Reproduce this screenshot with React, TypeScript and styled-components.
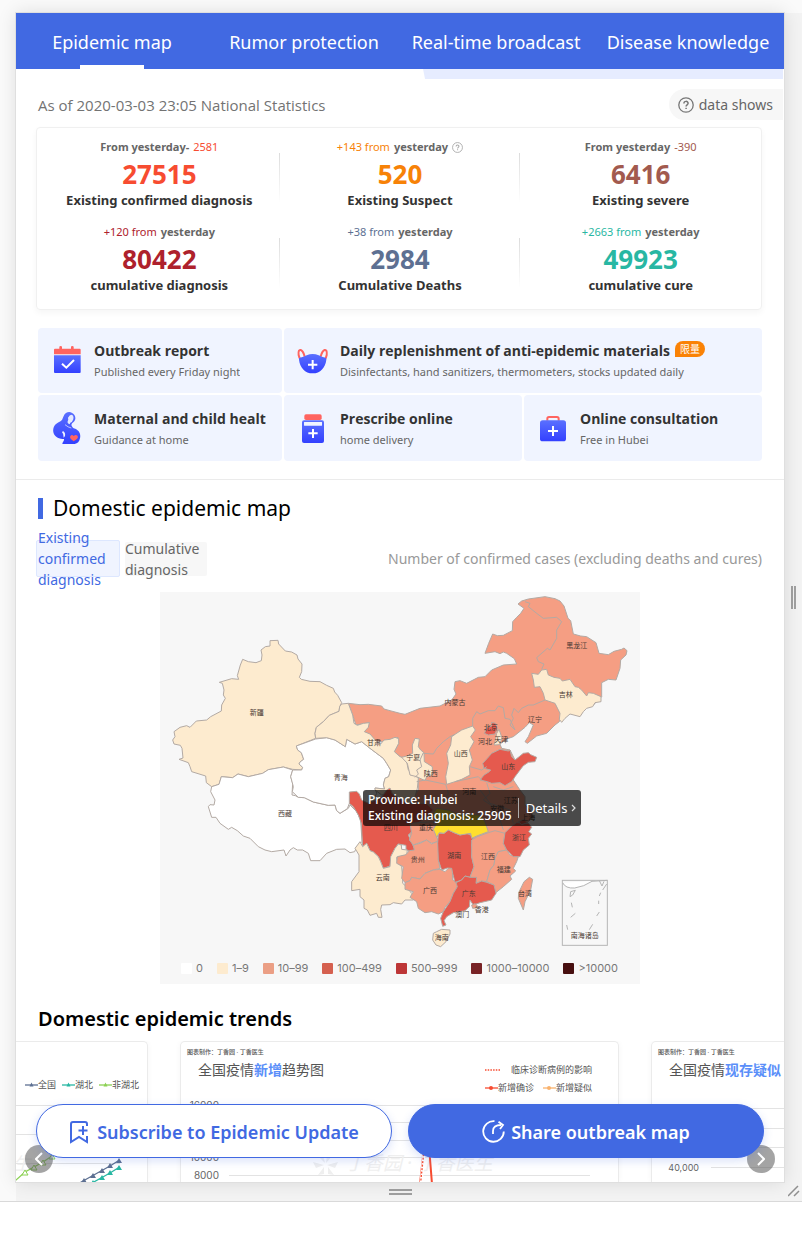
import React from 'react';
import styled, { createGlobalStyle, css } from 'styled-components';

const GlobalStyle = createGlobalStyle`
  * { box-sizing: border-box; }
  body {
    margin: 0;
    background: #fff;
    font-family: 'Noto Sans', 'Noto Sans CJK SC', sans-serif;
  }
  button { font-family: inherit; }
  h1, h2, h3, p, ul { margin: 0; padding: 0; }
  ul { list-style: none; }
`;

/* ---------- Responsive preview frame ---------- */

const Stage = styled.div`
  display: grid;
  grid-template-columns: 16px minmax(0, 1fr) 18px;
  grid-template-rows: 13px auto 19px;
  background: #fafafa;
  border-bottom: 1px solid #d9d9d9;
`;

const Device = styled.main`
  grid-area: 2 / 2;
  position: relative;
  overflow: hidden;
  background: #fff;
  outline: 1px solid #dfdfdf;
  box-shadow: 0 0 18px rgba(0, 0, 0, 0.12);
`;

const SideGutter = styled.div`
  grid-area: 2 / 3 / 4 / 4;
  display: flex;
  flex-direction: column;
  align-items: center;
  justify-content: center;
  padding-bottom: 19px;
  background: #f3f3f3;
`;

const BottomGutter = styled.div`
  grid-area: 3 / 2;
  display: flex;
  align-items: center;
  justify-content: center;
  background: #f3f3f3;
`;

const Grip = styled.span<{ $vertical?: boolean }>`
  display: block;
  ${({ $vertical }) =>
    $vertical
      ? css`
          width: 5px;
          height: 23px;
          border-left: 2px solid #a0a0a0;
          border-right: 2px solid #a0a0a0;
        `
      : css`
          width: 23px;
          height: 6px;
          border-top: 2px solid #a0a0a0;
          border-bottom: 2px solid #a0a0a0;
        `}
`;

const CornerGrip = styled.svg`
  grid-area: 3 / 3;
  align-self: start;
  justify-self: end;
  margin: 3px 2px 0 0;
`;

/* ---------- Navigation ---------- */

const Nav = styled.nav`
  display: grid;
  grid-template-columns: repeat(4, 1fr);
  height: 56px;
  background: #4169e2;
`;

const NavLink = styled.a<{ $active?: boolean }>`
  display: flex;
  align-items: center;
  justify-content: center;
  padding-top: 2px;
  color: #fff;
  font-size: 18px;
  white-space: nowrap;
  text-decoration: none;
  background: ${({ $active }) =>
    $active ? 'linear-gradient(#fff, #fff) center bottom / 64px 4px no-repeat' : 'none'};
`;

const Banner = styled.div`
  height: 10px;
  margin: 0 1px 0 53%;
  background: #e6ecff;
  clip-path: polygon(0 0, 100% 0, 100% 100%, 2px 100%);
`;

/* ---------- Statistics ---------- */

const StatsHead = styled.div`
  display: flex;
  align-items: center;
  justify-content: space-between;
  margin: 10px 1px 7px 22px;
  font-family: 'Open Sans', sans-serif;
  font-size: 15px;
  color: #737373;
`;

const DataButton = styled.button`
  display: flex;
  align-items: center;
  gap: 5px;
  height: 31px;
  padding: 0 10px 0 9px;
  border: 0;
  border-radius: 16px 0 0 16px;
  background: #f7f7f7;
  color: #666;
  font-family: 'Noto Sans', sans-serif;
  font-size: 14px;
`;

const StatsCard = styled.section`
  display: grid;
  grid-template-columns: repeat(3, 1fr);
  row-gap: 13px;
  margin: 0 22px 0 20px;
  padding: 9px 0 15px 2px;
  border: 1px solid #f0f0f0;
  border-radius: 4px;
  box-shadow: 0 3px 6px rgba(0, 0, 0, 0.04);
`;

const Stat = styled.div`
  text-align: center;
  background: linear-gradient(#dcdcdc, #fff) right 16px / 1px 50px no-repeat;
  &:nth-child(3n) { background: none; }
`;

const StatChange = styled.p<{ $color: string }>`
  display: flex;
  align-items: center;
  justify-content: center;
  gap: 4px;
  line-height: 20px;
  font-size: 11px;
  color: ${({ $color }) => $color};
  b { color: #666; }
`;

const StatValue = styled.p<{ $color: string }>`
  font-size: 26px;
  line-height: 34px;
  font-weight: 700;
  color: ${({ $color }) => $color};
`;

const StatLabel = styled.p`
  font-size: 13px;
  line-height: 18px;
  font-weight: 700;
  color: #333;
`;

/* ---------- Services ---------- */

const Services = styled.section`
  display: grid;
  grid-template-columns: 244fr 238fr 238fr;
  grid-template-rows: 65px 66px;
  gap: 2px;
  margin: 18px 22px;
`;

const Tile = styled.a<{ $wide?: boolean }>`
  display: flex;
  align-items: center;
  gap: 11px;
  min-width: 0;
  padding: 0 12px 0 13px;
  border-radius: 4px;
  background: #f0f4ff;
  text-decoration: none;
  ${({ $wide }) => $wide && 'grid-column: span 2;'}
  svg { flex: none; }
`;

const TileText = styled.div`
  min-width: 0;
  overflow: hidden;
  white-space: nowrap;
`;

const TileTitle = styled.p`
  display: flex;
  gap: 5px;
  font-family: 'Open Sans', 'Noto Sans CJK SC', sans-serif;
  font-size: 14px;
  line-height: 22px;
  font-weight: 700;
  color: #333;
`;

const TileNote = styled.p`
  font-size: 11px;
  line-height: 19px;
  color: #666;
`;

const Tag = styled.span`
  height: 16px;
  margin-top: 1px;
  padding: 0 5px;
  border-radius: 8px 8px 8px 0;
  background: #fa8206;
  color: #fff;
  font-size: 10px;
  line-height: 16px;
  font-weight: 400;
`;

/* ---------- Map section ---------- */

const MapSection = styled.section`
  border-top: 1px solid #ebebeb;
`;

const SectionTitle = styled.h2`
  display: flex;
  align-items: center;
  gap: 10px;
  margin: 13px 22px 0;
  font-size: 21px;
  line-height: 30px;
  font-weight: 400;
  color: #000;
  &::before {
    content: '';
    width: 5px;
    height: 21px;
    background: #4169e2;
  }
`;

const MapControls = styled.div`
  display: flex;
  align-items: center;
  gap: 5px;
  height: 37px;
  margin: 17px 22px 15px 20px;
`;

const Toggle = styled.button<{ $active?: boolean }>`
  display: flex;
  align-items: center;
  width: ${({ $active }) => ($active ? 84 : 82)}px;
  height: ${({ $active }) => ($active ? 37 : 34)}px;
  padding: ${({ $active }) => ($active ? '0 1px' : '0')};
  border: ${({ $active }) => ($active ? '1px solid #dde7ff' : '0')};
  border-radius: 2px;
  background: ${({ $active }) => ($active ? '#f0f4ff' : '#f7f7f7')};
  color: ${({ $active }) => ($active ? '#4169e2' : '#666')};
  font-size: 14px;
  line-height: 21px;
  text-align: left;
`;

const MapCaption = styled.p`
  margin-left: auto;
  font-size: 14px;
  line-height: 21px;
  color: #999;
`;

const MapFrame = styled.figure`
  position: relative;
  width: 480px;
  margin: 0 auto;
  background: #f7f7f7;
  svg { display: block; }
`;

const Legend = styled.ul`
  display: flex;
  gap: 14px;
  height: 32px;
  padding: 0 0 0 21px;
  align-items: center;
`;

const LegendItem = styled.li<{ $color: string }>`
  display: flex;
  align-items: center;
  gap: 4px;
  font-family: Inter, sans-serif;
  font-size: 11px;
  color: #777;
  &::before {
    content: '';
    width: 11px;
    height: 11px;
    border-radius: 1px;
    background: ${({ $color }) => $color};
  }
`;

const MapTip = styled.div`
  position: absolute;
  left: 203px;
  top: 198px;
  display: flex;
  align-items: center;
  height: 36px;
  padding: 0 5px;
  border-radius: 3px;
  background: rgba(0, 0, 0, 0.7);
  color: #fff;
  font-size: 12px;
  line-height: 16px;
  font-weight: 500;
  white-space: nowrap;
`;

const TipLink = styled.a`
  display: flex;
  align-items: center;
  gap: 4px;
  height: 20px;
  margin-left: 6px;
  padding-left: 7px;
  border-left: 1px solid #aaa;
  color: #fff;
  font-size: 13px;
  font-weight: 400;
  text-decoration: none;
`;

/* ---------- Trends ---------- */

const TrendsTitle = styled.h2`
  margin: 20px 22px 7px;
  font-size: 20px;
  line-height: 30px;
  font-weight: 600;
  color: #000;
`;

const Track = styled.div`
  display: flex;
  justify-content: center;
  gap: 32px;
  padding-right: 1px;
  overflow: hidden;
`;

const TrendCard = styled.article`
  flex: 0 0 439px;
  border: 1px solid #ebebeb;
  border-bottom: 0;
  border-radius: 5px 5px 0 0;
  box-shadow: 0 0 6px rgba(0, 0, 0, 0.04);
  svg { display: block; }
`;

const TrendHead = styled.header`
  display: flex;
  justify-content: space-between;
  height: 57px;
  padding: 5px 26px 0 6px;
`;

const TrendCredit = styled.p`
  font-size: 6px;
  line-height: 10px;
  font-weight: 500;
  color: #555;
`;

const TrendTitle = styled.h3`
  padding-left: 11px;
  font-size: 14px;
  line-height: 26px;
  font-weight: 400;
  color: #555;
  b { color: #5b8ff9; }
`;

const SeriesList = styled.ul<{ $edge?: boolean }>`
  display: flex;
  flex-wrap: wrap;
  justify-content: flex-end;
  align-content: flex-end;
  column-gap: ${({ $edge }) => ($edge ? 6 : 9)}px;
  width: ${({ $edge }) => ($edge ? 140 : 120)}px;
  margin-right: ${({ $edge }) => ($edge ? '-18px' : '0')};
  padding-bottom: ${({ $edge }) => ($edge ? '5px' : '2px')};
  font-size: 9px;
  line-height: 18px;
  color: #555;
  white-space: nowrap;
`;

const SeriesItem = styled.li<{ $gap?: number }>`
  display: flex;
  align-items: center;
  gap: ${({ $gap = 0 }) => $gap}px;
`;

/* ---------- Floating controls ---------- */

const Actions = styled.div`
  position: absolute;
  left: 20px;
  right: 20px;
  bottom: 24px;
  display: grid;
  grid-template-columns: 1fr 1fr;
  gap: 16px;
`;

const ActionButton = styled.button<{ $primary?: boolean }>`
  display: flex;
  align-items: center;
  justify-content: center;
  gap: ${({ $primary }) => ($primary ? 6 : 8)}px;
  height: 54px;
  padding: 1px 0 0;
  border: 1px solid #4169e2;
  border-radius: 27px;
  background: ${({ $primary }) => ($primary ? '#4169e2' : '#fff')};
  color: ${({ $primary }) => ($primary ? '#fff' : '#4169e2')};
  box-shadow: 0 3px 10px rgba(65, 105, 226, 0.2);
  font-size: 18px;
  font-weight: 600;
  white-space: nowrap;
`;

const Arrow = styled.button<{ $side: 'left' | 'right' }>`
  position: absolute;
  ${({ $side }) => $side}: 9px;
  bottom: 9px;
  display: grid;
  place-items: center;
  width: 28px;
  height: 28px;
  padding: 0;
  border: 0;
  border-radius: 50%;
  background: rgba(90, 90, 90, 0.55);
`;

/* ---------- Icons ---------- */

const Help = ({ size, color }: { size: number; color: string }) => (
  <svg width={size} height={size} viewBox="0 0 16 16" fill="none" stroke={color} strokeWidth="1.3">
    <circle cx="8" cy="8" r="7.2" />
    <path d="M5.9 6.5c0-2.8 4.2-2.8 4.2-.2 0 1.6-2 1.5-2 3.2M8.1 10.7v1.4" strokeWidth="1.5" />
  </svg>
);

const IconDefs = () => (
  <defs>
    <linearGradient id="blue" x1="0" y1="0" x2="0" y2="1">
      <stop offset="0" stopColor="#5a70ff" />
      <stop offset="1" stopColor="#3340ff" />
    </linearGradient>
  </defs>
);

const CalendarIcon = () => (
  <svg width="32" height="32" viewBox="0 0 96 96">
    <IconDefs />
    <path d="M9 28V14q0-3 3-3h13V6q0-3 4-3t4 3v5h27V6q0-3 4-3t4 3v5h18q3 0 3 3v14z" fill="#ff6460" />
    <path d="M9 31h80v50q0 3-3 3H12q-3 0-3-3z" fill="url(#blue)" />
    <path d="M33 56l13 12 23-23" fill="none" stroke="#fff" strokeWidth="6" />
  </svg>
);

const MaskIcon = () => (
  <svg width="32" height="32" viewBox="0 0 96 96">
    <path d="M12 46C4 36 3 23 6 17q5-5 11 3c4 6 5 11 6 15M82 46c8-10 9-23 6-29q-5-5-11 3c-4 6-5 11-6 15" fill="none" stroke="#ff6460" strokeWidth="6" />
    <path d="M9 38q10-1 20-7 18-8 36 0 10 6 20 7 4 0 3 6c-3 24-18 41-41 41S9 68 6 44q-1-6 3-6z" fill="url(#blue)" />
    <path d="M47 45v28M33 59h28" stroke="#fff" strokeWidth="6" />
  </svg>
);

const MaternalIcon = () => (
  <svg width="32" height="32" viewBox="0 0 96 96">
    <path d="M37 14C42 1 54-2 62 2c10 4 13 14 10 22-2 6-8 8-10 12-2 5 1 8 6 13 17 5 22 17 19 30-2 10-7 16-16 17H34c0-6 6-8 5-15-8 1-18-1-25-8C3 62 5 46 14 37c7-7 14-7 18-12 3-4 3-7 5-11z" fill="url(#blue)" />
    <path d="M51 17q7-12 14-7 4 4 2 12-3 9-9 10l-2 5q-8-3-6-9 3-5 1-11z" fill="#e4eaff" />
    <path d="M42 38q9 8 19 10" fill="none" stroke="#f0f4ff" strokeWidth="2" />
    <path d="M36 57q8 5 6 15l-4 5q1-11-5-16z" fill="#f0f4ff" />
    <path d="M68 88Q54 79 58 72q5-6 10 0 7-6 12 0 4 7-12 16z" fill="#ff6460" />
  </svg>
);

const MedicineIcon = () => (
  <svg width="32" height="32" viewBox="0 0 96 96">
    <rect x="22" y="7" width="52" height="17" rx="5" fill="#ff6460" />
    <rect x="15" y="25" width="66" height="68" rx="6" fill="url(#blue)" />
    <rect x="21" y="30" width="54" height="11" rx="1" fill="#f0f4ff" />
    <path d="M48 51v27M34 64h28" stroke="#fff" strokeWidth="6" />
  </svg>
);

const ConsultIcon = () => (
  <svg width="32" height="32" viewBox="0 0 96 96">
    <path d="M31 26v-6q0-5 5-5h24q5 0 5 5v6" fill="none" stroke="#ff6460" strokeWidth="6" />
    <rect x="9" y="25" width="78" height="63" rx="8" fill="url(#blue)" />
    <path d="M48 42v30M33 57h30" stroke="#fff" strokeWidth="6" />
  </svg>
);

/* ---------- Data ---------- */

const stats = [
  { change: <><b>From yesterday-</b> 2581</>, value: '27515', label: 'Existing confirmed diagnosis', color: '#f74c31' },
  { change: <>+143 from <b>yesterday</b><Help size={11} color="#aaa" /></>, value: '520', label: 'Existing Suspect', color: '#f78207' },
  { change: <><b>From yesterday</b> -390</>, value: '6416', label: 'Existing severe', color: '#a25a4e' },
  { change: <>+120 from <b>yesterday</b></>, value: '80422', label: 'cumulative diagnosis', color: '#ae212c' },
  { change: <>+38 from <b>yesterday</b></>, value: '2984', label: 'Cumulative Deaths', color: '#5d7092' },
  { change: <>+2663 from <b>yesterday</b></>, value: '49923', label: 'cumulative cure', color: '#28b7a3' },
];

const legend = [
  ['0', '#ffffff'],
  ['1–9', '#fdebcf'],
  ['10–99', '#eb9f85'],
  ['100–499', '#d5604f'],
  ['500–999', '#bd3637'],
  ['1000–10000', '#782326'],
  ['>10000', '#470f10'],
];

const CREAM = '#fdebcf';
const SALMON = '#f59e83';
const RED = '#e55a4e';

// Each region: fill, translation of its local coordinates, outline.
const regions: [string, number, number, string][] = [
  // North and east land mass: Inner Mongolia, Heilongjiang, Liaoning, Hebei, Shaanxi, Henan, Anhui, Jiangsu
  [SALMON, 0, 0, 'M565 340L600 344 625 343 665 348 672 357 690 362 720 370 735 373 750 367 780 355 840 348 875 330 888 312 882 298 885 275 900 272 920 280 955 262 975 260 995 240 1030 225 1070 222 1063 206 1040 190 1030 186 1020 191 1005 185 975 190 986 160 998 132 1012 137 1030 136 1057 122 1058 95 1070 82 1082 70 1092 55 1074 42 1085 33 1105 27 1155 20 1185 26 1200 33 1212 48 1224 85 1232 92 1240 132 1262 138 1280 140 1308 158 1317 190 1345 194 1362 184 1385 178 1392 174 1401 182 1398 195 1382 210 1380 235 1368 270 1345 268 1325 278 1325 320 1300 345 1205 375 1198 395 1185 405 1160 430 1130 438 1102 460 1095 455 1105 440 1120 405 1108 398 1095 412 1060 440 1040 447 1020 462 1025 475 1050 480 1070 520 1060 570 1080 600 1095 620 1095 645 1115 665 1118 680 1100 700 1050 720 1000 760 900 740 750 740 740 650 775 600 775 550 720 500 703 485 716 460 714 442 670 455 650 455 613 425 628 398 588 405 578 375z'],
  // Xinjiang
  [CREAM, 0, 0, 'M330 152L354 151 356 162 376 183 395 186 411 195 414 207 426 222 425 245 418 262 424 268 450 274 480 275 500 286 520 295 524 306 533 316 545 338 539 350 537 364 508 376 490 395 469 412 465 430 467 445 409 468 413 480 424 488 431 508 420 516 417 522 428 532 425 540 398 538 370 531 325 539 308 550 265 560 234 552 218 563 184 560 177 583 155 590 139 578 137 558 95 545 90 530 85 518 57 508 69 504 66 475 61 466 42 462 38 450 45 440 42 425 60 412 80 407 90 412 109 393 140 390 152 380 184 363 185 345 196 325 190 315 192 300 187 280 178 277 215 266 236 268 232 257 241 225 248 208 265 215 288 218 304 212 306 195 303 180 316 170 330 168z'],
  // Tibet
  ['#fff', 0, 0, 'M155 590L177 583 184 560 218 563 234 552 265 560 308 550 325 539 370 531 398 540 392 560 398 580 396 615 406 617 415 622 433 623 460 636 505 646 525 645 530 662 540 670 565 655 570 645 590 665 602 690 606 755 590 770 584 785 570 788 555 777 530 778 500 790 480 812 452 812 445 790 428 780 412 780 400 773 390 780 378 798 372 780 335 785 315 780 295 770 270 745 250 738 232 722 215 712 205 718 180 700 168 682 155 682 145 650 150 644 162 645 165 630 152 605z'],
  // Qinghai
  ['#fff', 0, 0, 'M409 468L467 447 500 443 525 450 556 470 560 448 585 462 605 455 630 475 670 505 680 520 692 540 686 560 675 565 670 585 674 597 645 594 650 610 640 630 600 660 568 640 562 656 540 670 530 662 525 645 505 646 460 636 433 623 415 622 397 605 400 590 392 560 398 540 425 540 428 532 417 522 420 516 431 508 424 488 413 480z'],
  // Gansu
  [CREAM, 0, 0, 'M545 342L565 340 578 375 582 400 592 406 610 400 628 398 625 412 613 425 630 432 650 455 662 462 672 450 690 448 705 442 716 446 716 460 703 485 720 500 738 505 745 540 775 565 772 595 765 620 750 640 700 640 680 612 665 615 645 600 645 594 674 597 670 585 675 565 686 560 692 540 680 520 670 505 630 475 605 455 585 462 560 448 556 470 525 450 500 443 467 445 465 430 469 412 490 395 508 376 537 364 539 350z'],
  // Sichuan
  [RED, 0, 0, 'M568 606L590 604 598 612 605 630 625 640 665 622 680 600 690 594 697 612 740 640 800 640 820 660 790 690 755 708 758 722 745 735 765 780 750 785 738 778 738 766 715 762 705 775 695 795 690 828 670 835 662 815 655 800 640 786 630 782 620 760 608 770 604 700 595 675 580 650 568 640z'],
  // Yunnan
  [CREAM, 0, 0, 'M600 755L608 770 620 760 630 782 640 786 655 800 662 815 670 835 690 830 692 800 705 775 715 762 724 765 725 778 742 780 740 795 710 802 712 818 725 830 728 865 728 880 745 895 750 905 765 918 760 930 735 930 725 942 700 938 690 944 665 945 662 958 666 982 655 982 650 970 630 976 622 960 612 955 612 930 600 920 600 898 575 902 575 875 597 845 597 795 585 775z'],
  // Chongqing
  [SALMON, 630, 600, 'M120 100L190 95 195 125 205 155 185 160 170 150 130 165 118 150 125 130z'],
  // Guizhou
  [SALMON, 630, 600, 'M82 200L108 194 118 182 133 180 130 165 150 160 170 150 185 162 200 155 208 165 205 210 210 235 190 240 165 250 150 267 125 262 120 272 105 278 95 265 100 230 80 220z'],
  // Guangxi
  [SALMON, 630, 600, 'M105 278L120 272 125 262 150 267 165 250 190 240 210 238 225 245 238 232 247 236 248 270 262 275 262 290 250 310 240 335 225 352 220 365 205 372 185 365 165 368 145 355 140 335 120 322 130 305 105 298z'],
  // Hunan
  [RED, 630, 600, 'M205 130L222 130 235 120 252 128 270 135 290 130 308 138 310 150 305 165 308 180 305 200 312 230 300 262 285 258 275 270 255 277 248 250 245 235 232 234 215 240 205 210 203 160z'],
  // Jiangxi
  [SALMON, 630, 600, 'M305 150L322 140 355 128 375 122 405 130 400 160 410 180 385 185 375 205 372 225 360 240 350 275 335 273 320 280 312 265 300 262 312 230 305 200z'],
  // Fujian
  [SALMON, 630, 600, 'M410 180L420 195 445 200 440 215 430 235 437 243 420 258 425 268 400 290 375 310 372 285 350 275 360 240 372 225 375 205 385 185z'],
  // Guangdong
  [RED, 630, 600, 'M300 262L320 262 318 280 335 273 350 277 372 285 378 310 365 330 330 338 310 345 300 330 298 350 285 362 270 365 250 368 230 380 222 392 228 405 218 409 212 385 220 365 240 335 250 310 262 290 258 278 275 270 285 258z'],
  // Zhejiang
  [RED, 630, 600, 'M405 128L425 108 440 98 475 100 485 112 476 125 485 132 475 145 478 165 460 180 450 200 430 200 410 180 400 160z'],
  // Hubei
  ['#ffdf2e', 630, 600, 'M190 118L200 100 190 70 200 55 235 60 260 72 330 75 345 95 355 125 320 138 305 145 302 130 270 135 252 128 235 120 222 130 208 128 200 142z'],
  // Hainan
  [CREAM, 630, 600, 'M190 430L200 425 215 418 240 420 240 432 228 455 212 470 198 465 188 450z'],
  // Taiwan
  [SALMON, 630, 600, 'M478 262L488 268 482 300 465 335 460 360 445 325 446 308 462 275z'],
  // Hong Kong
  [SALMON, 630, 600, 'M305 345L315 341 322 347 318 354 308 355z'],
  // Jilin
  [CREAM, 720, 0, 'M395 250L415 253 425 240 440 238 445 255 462 262 480 265 487 273 510 268 525 290 535 292 545 300 560 318 565 308 580 310 603 320 603 335 585 338 578 350 560 355 550 365 540 380 510 372 495 385 485 397 478 388 480 370 465 340 435 330 430 310 420 290 403 292 400 270z'],
  // Shanxi
  [CREAM, 720, 0, 'M155 440L165 433 185 420 218 408 226 420 212 440 222 455 208 480 217 510 208 530 210 555 185 568 165 575 140 583 137 560 145 520 140 490 152 465z'],
  // Ningxia
  [CREAM, 720, 0, 'M45 445L58 447 55 470 62 480 72 488 73 515 97 530 97 555 80 560 75 572 50 560 30 555 22 520 5 502 20 498 38 490 37 465z'],
  // Tianjin
  [CREAM, 720, 0, 'M290 430L297 418 303 435 306 445 298 464 282 465 287 448z'],
  // Beijing
  [RED, 720, 0, 'M262 412L275 408 275 397 287 400 292 415 285 432 265 435 253 430z'],
  // Shandong
  [RED, 720, 0, 'M300 478L325 483 330 480 335 500 345 510 370 490 385 488 392 494 410 502 405 515 385 517 370 527 360 540 345 560 335 575 315 587 300 578 275 580 262 575 240 570 252 555 268 545 272 540 252 535 248 520 262 505 275 490z'],
  // Shanghai
  [RED, 630, 600, 'M445 95L462 88 472 98 455 104z'],
];

const borders = [
  'M1095 35L1110 40 1105 50 1130 70 1150 85 1190 82 1205 95 1190 120 1190 145 1170 180 1162 175 1130 203 1135 215 1152 222 1145 238',
  'M1155 330L1120 345 1105 345 1085 355 1075 368 1062 355 1055 375 1060 385 1050 405 1065 420',
  'M938 408L938 385 950 365 960 372 985 362 1005 362 1015 348 1030 353 1035 385 1050 388 1065 420',
  'M790 490L820 492 830 475 850 455 870 440 885 433',
  'M930 530L965 540 980 530',
  'M770 575L795 570 820 575 857 583M885 575L955 560 965 570',
  'M857 583L865 610 850 640',
  'M980 578L990 610 970 630 1000 650 1020 690 1030 720M1000 590L1030 600 1060 590M960 600L990 640 1050 660 1060 700',
  'M790 488L780 510 785 530 770 540 775 552 765 562',
];

const places: [string, number, number][] = [
  ['新疆', 290, 375], ['甘肃', 642, 465], ['青海', 542, 570], ['西藏', 375, 678], ['内蒙古', 885, 346],
  ['黑龙江', 1250, 174], ['吉林', 1217, 321], ['辽宁', 1125, 396], ['北京', 992, 420], ['天津', 1024, 456],
  ['河北', 975, 462], ['山西', 902, 498], ['宁夏', 760, 510], ['陕西', 812, 558], ['山东', 1045, 537],
  ['河南', 928, 612], ['江苏', 1052, 640], ['安徽', 1012, 664], ['上海', 1105, 690], ['四川', 692, 719],
  ['重庆', 798, 721], ['浙江', 1077, 750], ['湖南', 883, 805], ['江西', 984, 808], ['贵州', 773, 816],
  ['福建', 1031, 846], ['云南', 668, 870], ['广西', 810, 909], ['广东', 926, 918], ['台湾', 1095, 918],
  ['香港', 965, 966], ['澳门', 907, 980], ['海南', 845, 1050], ['南海诸岛', 1274, 1044],
];

const ChinaMap = () => (
  <svg width="480" height="360" viewBox="0 6 1440 1080" role="img" aria-label="Epidemic map of China">
    <g stroke="#b3aaa4" strokeWidth="3" strokeLinejoin="round">
      {regions.map(([fill, x, y, d], i) => (
        <path key={i} d={d} fill={fill} transform={`translate(${x} ${y})`} />
      ))}
      {borders.map((d) => (
        <path key={d} d={d} fill="none" />
      ))}
    </g>
    <g fill="none" stroke="#b5b5b5" strokeWidth="3">
      <rect x="1207" y="871" width="135" height="195" />
      <path d="M1208 878q8 18 36 16 28-4 52-20l46-3" fill="#fff" />
      <path d="M1318 872l8 16 6-14M1340 882l-12 18M1232 905l14-4-8 14-8 5zM1234 938l3 14M1246 970l-14 12M1220 1005l3 14M1298 1003l-10 16M1318 966l-8 12M1316 932v10M1322 908l-4 10" />
    </g>
    <g fontSize="21" fill="#4a3a34" textAnchor="middle">
      {places.map(([name, x, y]) => (
        <text key={name} x={x} y={y}>{name}</text>
      ))}
    </g>
  </svg>
);

const SeriesMark = ({ color, shape = 'dot' }: { color: string; shape?: 'dot' | 'triangle' | 'dotted' }) => (
  <svg width={shape === 'dotted' ? 16 : 13} height="8" viewBox={shape === 'dotted' ? '0 0 16 8' : '0 0 13 8'}>
    <path d="M0 4h16" stroke={color} strokeWidth={shape === 'dotted' ? 1.5 : 1.3} strokeDasharray={shape === 'dotted' ? '1.5 1.2' : undefined} />
    {shape === 'dot' && <circle cx="6" cy="4" r="2" fill={color} />}
    {shape === 'triangle' && <path d="M6.500 1.500l2 4h-4z" fill={color} />}
  </svg>
);

const NationTrend = () => (
  <svg width="437" height="83" viewBox="0 0 437 83">
    <g stroke="#e3e3e3"><path d="M40 6.500h397M40 35.500h397M40 64.500h370" /></g>
    <text x="285" y="71" fontSize="18" fontStyle="italic" fill="#efefef">医生</text>
    <g fill="none" strokeWidth="1.300">
      <path d="M290 92L306 81 315 73 324 68 333 63 342 57" stroke="#8bd152" />
      <path d="M358 91L373 82 382 77 391 72 400 67 408 62" stroke="#5d7092" />
      <path d="M370 91L382 84 391 79 400 74 408 69" stroke="#28b7a3" />
    </g>
    <path d="M312 76l3-5 3 5zM321 71l3-5 3 5zM330 66l3-5 3 5zM339 60l3-5 3 5z" fill="#fff" stroke="#8bd152" />
    <path d="M371 84l3-5 3 5zM380 79l3-5 3 5zM389 74l3-5 3 5zM397 69l3-5 3 5zM406 64l3-5 3 5z" fill="#5d7092" />
    <path d="M380 86l3-5 3 5zM389 81l3-5 3 5zM397 76l3-5 3 5zM406 71l3-5 3 5z" fill="#28b7a3" />
  </svg>
);

const NewCaseTrend = () => (
  <svg width="437" height="83" viewBox="0 0 437 83">
    <path d="M48 6.500h361M48 23.500h361M48 41.500h361M48 58.500h361M48 76.500h361" stroke="#e3e3e3" />
    <g fill="#efefef">
      <path d="M144 64l-9-9 7 1zM145 64l8-9-7 1zM143 66l-11-3 3 6zM146 66l11-3-3 6zM143 68l-6 8 6-1zM147 68l6 8-6-1z" />
      <text x="164" y="71" fontSize="19" fontStyle="italic">丁香园 · 丁香医生</text>
    </g>
    <g fontSize="10" fill="#666" textAnchor="end" fontFamily="Inter, sans-serif">
      <text x="38" y="10">16000</text>
      <text x="38" y="62">10000</text>
      <text x="38" y="80">8000</text>
    </g>
    <path d="M239 85L246 22 251 85" fill="none" stroke="#f74c31" strokeWidth="2" />
    <path d="M240 85L246 22" stroke="#fff" strokeWidth="3" />
    <path d="M239.500 85L246 22" stroke="#f74c31" strokeWidth="1.300" strokeDasharray="2 1.500" />
  </svg>
);

const SuspectTrend = () => (
  <svg width="437" height="83" viewBox="0 0 437 83">
    <path d="M59 9.500h340M59 29.500h340M59 48.500h340M59 68.500h340" stroke="#e3e3e3" />
    <text x="47" y="72" fontSize="9" fill="#666" textAnchor="end" fontFamily="Inter, sans-serif">40,000</text>
  </svg>
);

const Credit = () => <TrendCredit>图表制作：丁香园 · 丁香医生</TrendCredit>;

export default function App() {
  return (
    <>
      <GlobalStyle />
      <Stage>
        <SideGutter><Grip $vertical /></SideGutter>
        <BottomGutter><Grip /></BottomGutter>
        <CornerGrip width="12" height="13" viewBox="0 0 12 13" stroke="#8f8f8f" strokeWidth="1.500">
          <path d="M0 11L10 1M6 11l5-5" />
        </CornerGrip>
        <Device>
          <Nav>
            <NavLink href="#map" $active>Epidemic map</NavLink>
            <NavLink href="#rumor">Rumor protection</NavLink>
            <NavLink href="#live">Real-time broadcast</NavLink>
            <NavLink href="#knowledge">Disease knowledge</NavLink>
          </Nav>
          <Banner />

          <StatsHead>
            <p>As of 2020-03-03 23:05 National Statistics</p>
            <DataButton type="button"><Help size={16} color="#777" />data shows</DataButton>
          </StatsHead>
          <StatsCard>
            {stats.map((s) => (
              <Stat key={s.label}>
                <StatChange $color={s.color}>{s.change}</StatChange>
                <StatValue $color={s.color}>{s.value}</StatValue>
                <StatLabel>{s.label}</StatLabel>
              </Stat>
            ))}
          </StatsCard>

          <Services>
            <Tile href="#report">
              <CalendarIcon />
              <TileText>
                <TileTitle>Outbreak report</TileTitle>
                <TileNote>Published every Friday night</TileNote>
              </TileText>
            </Tile>
            <Tile href="#materials" $wide>
              <MaskIcon />
              <TileText>
                <TileTitle>Daily replenishment of anti-epidemic materials<Tag>限量</Tag></TileTitle>
                <TileNote>Disinfectants, hand sanitizers, thermometers, stocks updated daily</TileNote>
              </TileText>
            </Tile>
            <Tile href="#maternal">
              <MaternalIcon />
              <TileText>
                <TileTitle>Maternal and child healt</TileTitle>
                <TileNote>Guidance at home</TileNote>
              </TileText>
            </Tile>
            <Tile href="#prescribe">
              <MedicineIcon />
              <TileText>
                <TileTitle>Prescribe online</TileTitle>
                <TileNote>home delivery</TileNote>
              </TileText>
            </Tile>
            <Tile href="#consult">
              <ConsultIcon />
              <TileText>
                <TileTitle>Online consultation</TileTitle>
                <TileNote>Free in Hubei</TileNote>
              </TileText>
            </Tile>
          </Services>

          <MapSection id="map">
            <SectionTitle>Domestic epidemic map</SectionTitle>
            <MapControls>
              <Toggle type="button" $active>Existing confirmed diagnosis</Toggle>
              <Toggle type="button">Cumulative diagnosis</Toggle>
              <MapCaption>Number of confirmed cases (excluding deaths and cures)</MapCaption>
            </MapControls>
            <MapFrame>
              <ChinaMap />
              <Legend>
                {legend.map(([label, color]) => (
                  <LegendItem key={label} $color={color}>{label}</LegendItem>
                ))}
              </Legend>
              <MapTip>
                <div>
                  <p>Province: Hubei</p>
                  <p>Existing diagnosis: 25905</p>
                </div>
                <TipLink href="#hubei">
                  Details
                  <svg width="5" height="8" viewBox="0 0 5 8" fill="none" stroke="#ddd" strokeWidth="1.200"><path d="M1 1l3 3-3 3" /></svg>
                </TipLink>
              </MapTip>
            </MapFrame>
          </MapSection>

          <section>
            <TrendsTitle>Domestic epidemic trends</TrendsTitle>
            <Track>
              <TrendCard>
                <TrendHead>
                  <div>
                    <Credit />
                    <TrendTitle>全国疫情趋势图</TrendTitle>
                  </div>
                  <SeriesList $edge>
                    <SeriesItem><SeriesMark color="#5d7092" shape="triangle" />全国</SeriesItem>
                    <SeriesItem><SeriesMark color="#28b7a3" shape="triangle" />湖北</SeriesItem>
                    <SeriesItem><SeriesMark color="#8bd152" shape="triangle" />非湖北</SeriesItem>
                  </SeriesList>
                </TrendHead>
                <NationTrend />
              </TrendCard>
              <TrendCard>
                <TrendHead>
                  <div>
                    <Credit />
                    <TrendTitle>全国疫情<b>新增</b>趋势图</TrendTitle>
                  </div>
                  <SeriesList>
                    <SeriesItem $gap={10}><SeriesMark color="#f74c31" shape="dotted" />临床诊断病例的影响</SeriesItem>
                    <SeriesItem><SeriesMark color="#f74c31" />新增确诊</SeriesItem>
                    <SeriesItem><SeriesMark color="#f9b26d" />新增疑似</SeriesItem>
                  </SeriesList>
                </TrendHead>
                <NewCaseTrend />
              </TrendCard>
              <TrendCard>
                <TrendHead>
                  <div>
                    <Credit />
                    <TrendTitle>全国疫情<b>现存疑似</b></TrendTitle>
                  </div>
                </TrendHead>
                <SuspectTrend />
              </TrendCard>
            </Track>
          </section>

          <Arrow type="button" $side="left" aria-label="Previous chart">
            <svg width="8" height="14" viewBox="0 0 8 14" fill="none" stroke="#fff" strokeWidth="2"><path d="M7 1L1 7l6 6" /></svg>
          </Arrow>
          <Arrow type="button" $side="right" aria-label="Next chart">
            <svg width="8" height="14" viewBox="0 0 8 14" fill="none" stroke="#fff" strokeWidth="2"><path d="M1 1l6 6-6 6" /></svg>
          </Arrow>
          <Actions>
            <ActionButton type="button">
              <svg width="20" height="24" viewBox="0 0 20 24" fill="none" stroke="#4169e2" strokeWidth="2">
                <path d="M18 6V4q0-2-2-2H4Q2 2 2 4v18l8-5 8 5v-6M14 6v9M9.500 10.500h9" />
              </svg>
              Subscribe to Epidemic Update
            </ActionButton>
            <ActionButton type="button" $primary>
              <svg width="23" height="23" viewBox="0 0 23 23" fill="none" stroke="#fff" strokeWidth="1.800">
                <path d="M12.500 1.200A10.300 10.300 0 1 0 21.800 11.500M11 14V11q0-6 8-6M16.500 1.800L21 5l-3 4" />
              </svg>
              Share outbreak map
            </ActionButton>
          </Actions>
        </Device>
      </Stage>
    </>
  );
}
